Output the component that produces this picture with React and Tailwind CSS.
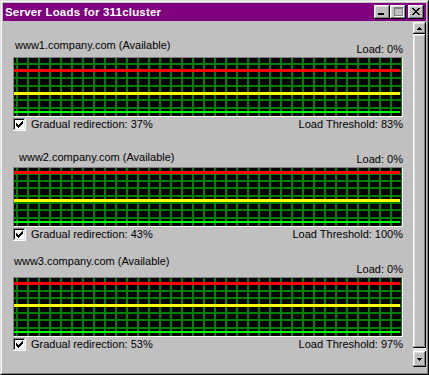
const servers = [
  { host: 'www1.company.com (Available)', load: 0, redirect: 37, threshold: 83, label: 'ml-[2px] mb-[4px]', top: 'mt-[18px]' },
  { host: 'www2.company.com (Available)', load: 0, redirect: 43, threshold: 100, label: 'ml-[6px] mb-[2px]', top: 'mt-[20px]' },
  { host: 'www3.company.com (Available)', load: 0, redirect: 53, threshold: 97, label: 'ml-[1px] mb-[8px]', top: 'mt-[14px]' },
];

const raised = 'shadow-[inset_-1px_-1px_#000,inset_1px_1px_#fff,inset_-2px_-2px_#808080,inset_2px_2px_#dfdfdf]';

const TitleButton = ({ children, className = '' }) => (
  <div className={`w-[16px] h-[14px] bg-[#c0c0c0] ${raised} ${className}`}>
    <svg width="16" height="14" className="block" shapeRendering="crispEdges">{children}</svg>
  </div>
);

const closeRows = ['xx....xx', '.xx..xx.', '..xxxx..', '...xx...', '..xxxx..', '.xx..xx.', 'xx....xx'];

const Checkbox = () => {
  const check = [[3, 5], [4, 6], [5, 7], [6, 6], [7, 5], [8, 4], [9, 3]];
  return (
    <svg width="13" height="13" className="block shrink-0" shapeRendering="crispEdges">
      <rect x="0" y="0" width="13" height="13" fill="#fff" />
      <rect x="0" y="0" width="12" height="1" fill="#808080" />
      <rect x="0" y="0" width="1" height="12" fill="#808080" />
      <rect x="1" y="1" width="10" height="1" fill="#000" />
      <rect x="1" y="1" width="1" height="10" fill="#000" />
      <rect x="1" y="11" width="11" height="1" fill="#dfdfdf" />
      <rect x="11" y="1" width="1" height="11" fill="#dfdfdf" />
      {check.map(([x, y]) => <rect key={x} x={x} y={y} width="1" height="3" fill="#000" />)}
    </svg>
  );
};

// value lines: 100% sits near the top, 0% near the bottom of the plot
const Chart = ({ load, redirect, threshold }) => {
  const y = (p) => Math.round(53 - p * 0.49);
  const cols = Array.from({ length: 36 }, (_, k) => 2 + 11 * k);
  const rows = [5, 12, 19, 27, 34, 41, 49];
  return (
    <div className="mt-[1px] h-[60px] border border-t-[#808080] border-l-[#808080] border-b-white border-r-white bg-black">
      <svg width="388" height="58" className="block" shapeRendering="crispEdges">
        {cols.map((x) => <rect key={'c' + x} x={x} y="0" width="2" height="58" fill="#008000" />)}
        {rows.map((r) => <rect key={'r' + r} x="0" y={r} width="388" height="2" fill="#008000" />)}
        <rect x="0" y={y(load)} width="386" height="2" fill="#00ff00" />
        <rect x="0" y={y(redirect) - 1} width="386" height="3" fill="#ffff00" />
        <rect x="0" y={y(threshold) - 1} width="386" height="3" fill="#ff0000" />
      </svg>
    </div>
  );
};

const Arrow = ({ down }) => (
  <svg width="5" height="3" className="block" shapeRendering="crispEdges">
    {down ? (
      <>
        <rect x="0" y="0" width="5" height="1" fill="#000" />
        <rect x="1" y="1" width="3" height="1" fill="#000" />
        <rect x="2" y="2" width="1" height="1" fill="#000" />
      </>
    ) : (
      <>
        <rect x="2" y="0" width="1" height="1" fill="#000" />
        <rect x="1" y="1" width="3" height="1" fill="#000" />
        <rect x="0" y="2" width="5" height="1" fill="#000" />
      </>
    )}
  </svg>
);

export default function App() {
  return (
    <div className="w-[429px] h-[375px] border border-t-[#dfdfdf] border-l-[#dfdfdf] border-b-black border-r-black font-['Liberation_Sans',Arial,sans-serif] text-[11px] leading-[13px] text-black">
      <div className="h-full flex flex-col p-[1px] border border-t-white border-l-white border-b-[#808080] border-r-[#808080] bg-[#c0c0c0]">
        <div className="h-[18px] shrink-0 bg-[#800080] flex items-center pl-[2px] pr-[2px]">
          <span className="text-white font-bold text-[11.5px] tracking-[0.2px]">Server Loads for 311cluster</span>
          <div className="ml-auto flex items-center">
            <TitleButton>
              <rect x="4" y="8" width="6" height="2" fill="#000" />
            </TitleButton>
            <TitleButton>
              <rect x="4" y="2" width="9" height="2" fill="#808080" />
              <rect x="4" y="2" width="1" height="9" fill="#808080" />
              <rect x="12" y="2" width="1" height="9" fill="#808080" />
              <rect x="4" y="10" width="9" height="1" fill="#808080" />
              <rect x="5" y="11" width="9" height="1" fill="#fff" />
              <rect x="13" y="3" width="1" height="9" fill="#fff" />
            </TitleButton>
            <TitleButton className="ml-[2px]">
              {closeRows.flatMap((row, r) =>
                row.split('').map((ch, c) => (ch === 'x' ? <rect key={r + '-' + c} x={4 + c} y={3 + r} width="1" height="1" fill="#000" /> : null))
              )}
            </TitleButton>
          </div>
        </div>

        <div className="flex-1 flex min-h-0">
          <div className="w-[410px] px-[10px] flex flex-col">
            {servers.map((s) => (
              <section key={s.host} className={s.top}>
                <div className="flex items-end justify-between">
                  <span className={s.label}>{s.host}</span>
                  <span>Load: {s.load}%</span>
                </div>
                <Chart load={s.load} redirect={s.redirect} threshold={s.threshold} />
                <div className="mt-[1px] h-[13px] flex items-center">
                  <Checkbox />
                  <span className="ml-[5px]">Gradual redirection: {s.redirect}%</span>
                  <span className="ml-auto">Load Threshold: {s.threshold}%</span>
                </div>
              </section>
            ))}
          </div>

          <div className="w-[13px] flex flex-col pt-[1px] pb-[5px]">
            <div className={`h-[12px] shrink-0 flex items-center justify-center ${raised}`}>
              <Arrow />
            </div>
            <div className={`flex-1 ${raised}`} />
            <div className="h-[3px] shrink-0 bg-[#e4e4e4]" />
            <div className={`h-[16px] shrink-0 flex items-center justify-center ${raised}`}>
              <Arrow down />
            </div>
          </div>
        </div>
      </div>
    </div>
  );
}
